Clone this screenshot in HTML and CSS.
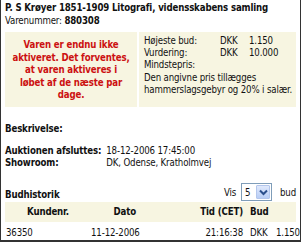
FILE: index.html
```html
<!DOCTYPE html>
<html>
<head>
<meta charset="utf-8">
<link rel="stylesheet" href="styles.css">
</head>
<body>
<div class="page">
  <div class="title">P. S Krøyer 1851-1909 Litografi, vidensskabens samling</div>
  <div class="itemno">Varenummer: <b>880308</b></div>

  <div class="status">
    <div class="notice">Varen er endnu ikke<br>aktiveret. Det forventes,<br>at varen aktiveres i<br>løbet af de næste par<br>dage.</div>
    <div class="bids">
      <div class="bidrow"><span class="lbl">Højeste bud:</span><span class="cur">DKK</span><span class="amt">1.150</span></div>
      <div class="bidrow"><span class="lbl">Vurdering:</span><span class="cur">DKK</span><span class="amt">10.000</span></div>
      <div class="bidrow"><span class="lbl">Mindstepris:</span></div>
      <p class="fee">Den angivne pris tillægges<br>hammerslagsgebyr og 20% i salær.</p>
    </div>
  </div>

  <div class="desc">Beskrivelse:</div>

  <div class="facts">
    <span class="fk">Auktionen afsluttes:</span><span class="fv">18-12-2006 17:45:00</span>
    <span class="fk">Showroom:</span><span class="fv">DK, Odense, Kratholmvej</span>
  </div>

  <div class="histhead">
    <span class="histtitle">Budhistorik</span>
    <span class="vis"><span class="vislbl">Vis</span><span class="select"><span class="selval">5</span><span class="selbtn"><svg width="9" height="7" viewBox="0 0 9 7"><path d="M1 1.5 L4.5 5 L8 1.5" fill="none" stroke="#2b4f8c" stroke-width="2"/></svg></span></span><span class="budlbl">bud</span></span>
  </div>

  <div class="hist">
    <div class="hrow head">
      <span class="c1">Kundenr.</span><span class="c2">Dato</span><span class="c3">Tid (CET)</span><span class="c4">Bud</span><span class="c5"></span>
    </div>
    <div class="hrow">
      <span class="c1 left">36350</span><span class="c2">11-12-2006</span><span class="c3">21:16:38</span><span class="c4">DKK</span><span class="c5">1.150</span>
    </div>
  </div>
</div>
</body>
</html>
```

FILE: styles.css
```css
* { box-sizing: border-box; }
html, body { margin: 0; padding: 0; background: #fff; }
body {
  font-family: "DejaVu Sans Condensed", "DejaVu Sans", Verdana, sans-serif;
  font-size: 9.6px;
  letter-spacing: -0.15px;
  color: #111;
}
.page {
  width: 301px;
  height: 242px;
  border-left: 1px solid #333;
  border-right: 1px solid #333;
  border-bottom: 2px solid #333;
  padding: 2px 4px 0 4px;
  overflow: hidden;
  white-space: nowrap;
}
.title { font-weight: bold; line-height: 12px; }
.itemno { line-height: 13px; }
.status {
  margin-top: 5px;
  display: grid;
  grid-template-columns: 132px 1fr;
  gap: 2px;
  background: #fff;
  height: 75px;
}
.notice, .bids { background: #f7f5e1; }
.notice {
  color: #cc1111;
  font-weight: bold;
  text-align: center;
  line-height: 12.5px;
  padding: 2px 2px 0 2px;
  display: flex;
  align-items: center;
  justify-content: center;
}
.bids { padding: 3px 4px 0 5px; line-height: 12px; }
.bidrow { display: flex; }
.lbl { width: 76px; }
.cur { width: 29px; }
.fee { margin: 1px 0 0 0; line-height: 12px; }
.desc { font-weight: bold; margin-top: 16px; line-height: 12px; }
.facts {
  margin-top: 10px;
  display: grid;
  grid-template-columns: auto 1fr;
  column-gap: 5px;
  line-height: 12px;
}
.fk { font-weight: bold; }
.histhead {
  margin-top: 14px;
  display: flex;
  justify-content: space-between;
  align-items: center;
  height: 18px;
}
.histtitle { font-weight: bold; margin-top: 5px; }
.vis { display: flex; align-items: center; }
.vislbl { margin-right: 5px; }
.budlbl { margin-left: 8px; }
.select {
  width: 31px; height: 18px;
  border: 1px solid #7f9db9;
  display: flex; align-items: center; justify-content: space-between;
  background: #fff;
  padding-right: 1px;
}
.selval { padding-left: 3px; }
.selbtn {
  width: 14px; height: 14px;
  background: linear-gradient(#e0e9fc, #b8cdf5);
  border: 1px solid #b3c6ec;
  border-radius: 1px;
  display: flex; align-items: center; justify-content: center;
}
.hist { margin-top: 1px; }
.hrow {
  display: grid;
  grid-template-columns: 86px 45px 107px 33px 1fr;
  line-height: 12px;
}
.hrow.head {
  background: #f7f5e1;
  font-weight: bold;
  padding: 4px 0;
}
.hrow:not(.head) { padding-top: 5px; }
.c1 { text-align: center; }
.c1.left { text-align: left; padding-left: 1px; }
.c2, .c3 { text-align: right; }
.c4 { padding-left: 7px; }
.c5 { text-align: right; padding-right: 4px; }
```
